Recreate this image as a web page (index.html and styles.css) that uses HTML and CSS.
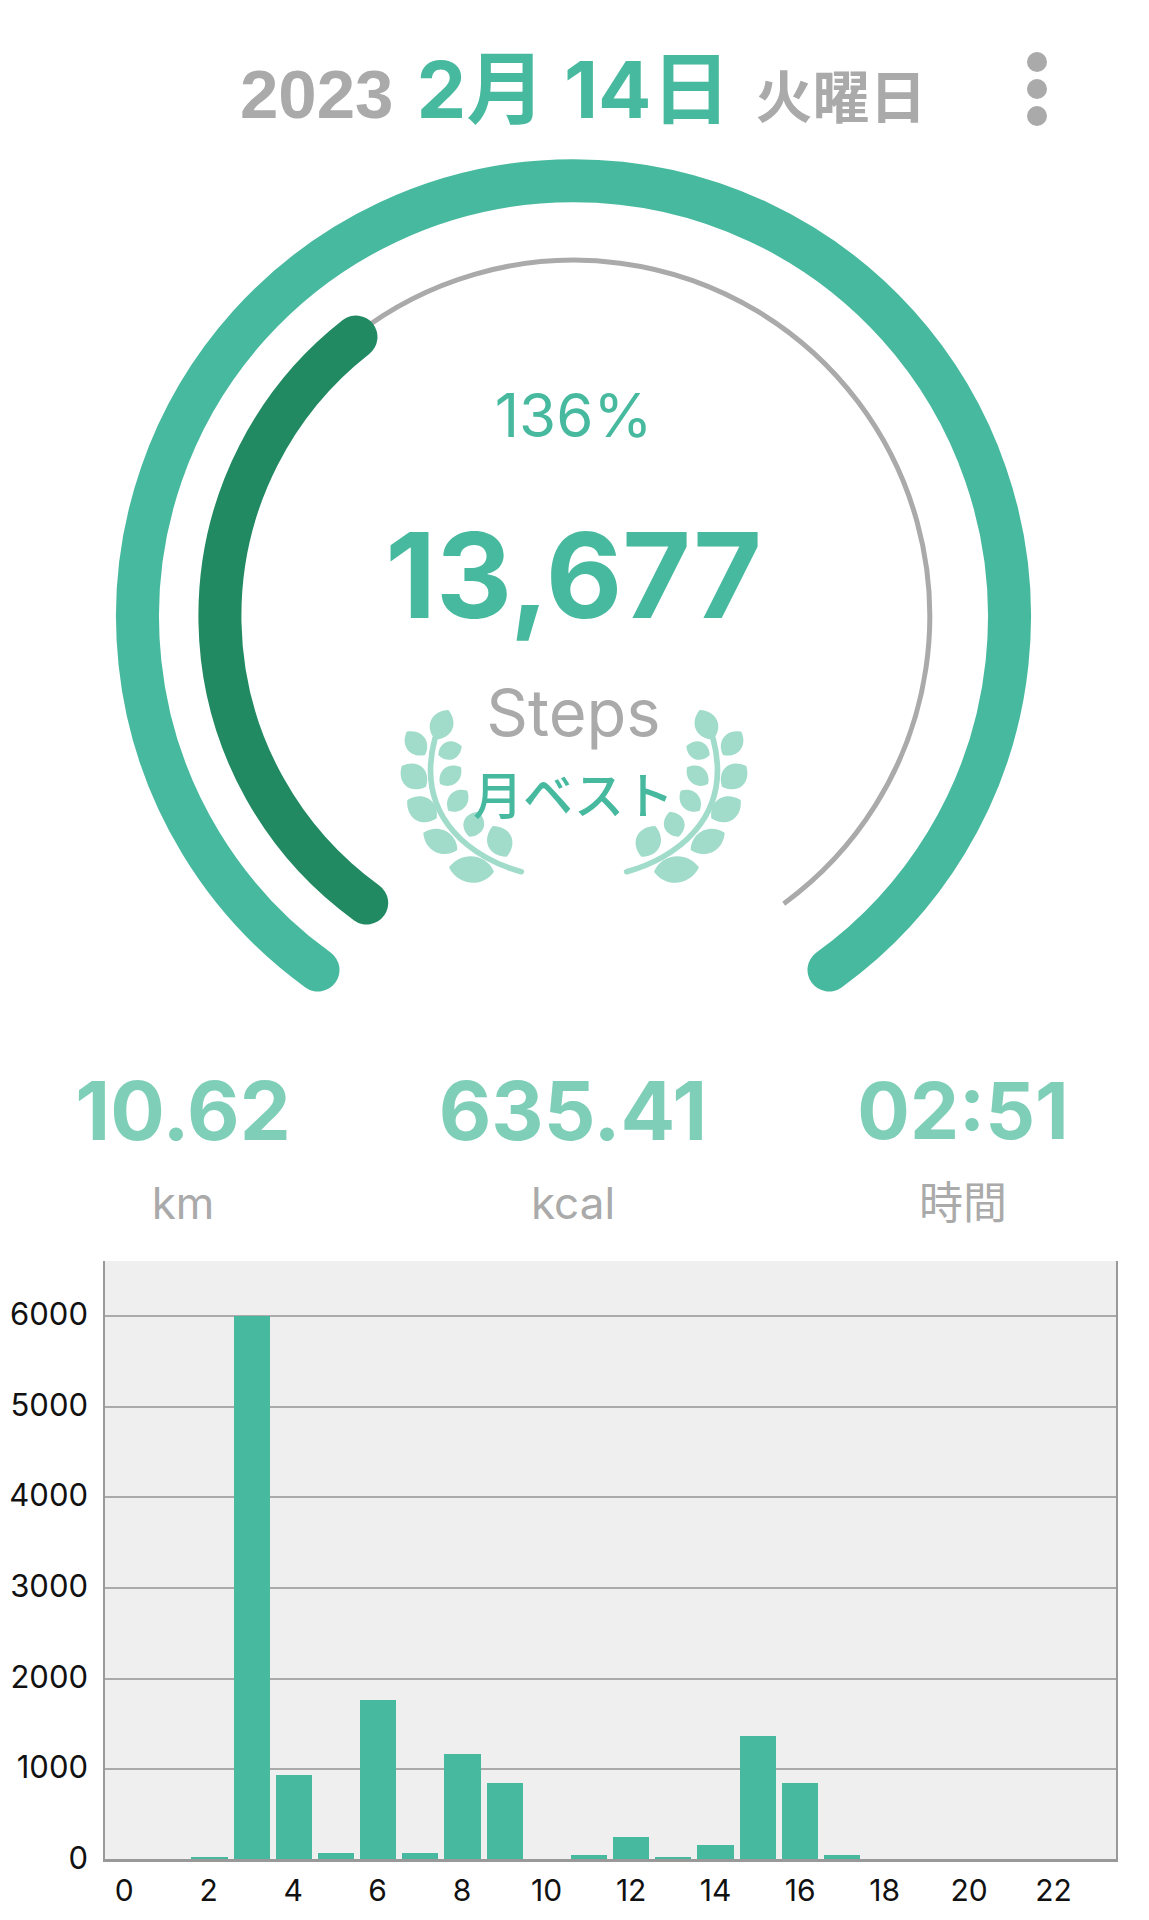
FILE: index.html
```html
<!DOCTYPE html>
<html>
	<head>
		<meta charset="utf-8">
		<title>歩数</title>
		<link rel="stylesheet" href="styles.css">
	</head>
	<body>
		<div class="header">
			<span class="year">2023</span>
			<span class="date">2月 14日</span>
			<span class="weekday">火曜日</span>
			<div class="menu"><i></i><i></i><i></i></div>
		</div>

		<div class="gauge">
			<svg class="gauge-svg" width="1149" height="880" viewBox="0 150 1149 880">
				<defs>
					<path id="leaf" d="M0 0C.2 -.5 .75 -.55 1 0C.75 .55 .2 .5 0 0Z"/>
					<g id="laurel" transform="translate(380 660) scale(.3333)">
						<path class="stem" d="M424 635C290 600 100 480 165 235"/>
						<use href="#leaf" transform="matrix(40 -88 80 36 165 238)"/>
						<use href="#leaf" transform="matrix(-55 -70 62 -49 135 285)"/>
						<use href="#leaf" transform="matrix(70 -27 26 65 175 285)"/>
						<use href="#leaf" transform="matrix(-73 -62 61 -72 138 380)"/>
						<use href="#leaf" transform="matrix(63 -50 44 55 180 372)"/>
						<use href="#leaf" transform="matrix(-88 -55 50 -80 170 475)"/>
						<use href="#leaf" transform="matrix(57 -60 52 50 205 452)"/>
						<use href="#leaf" transform="matrix(-102 -52 40 -79 232 570)"/>
						<use href="#leaf" transform="matrix(27 -75 74 26 268 530)"/>
						<use href="#leaf" transform="matrix(-42 -92 86 -40 380 590)"/>
						<use href="#leaf" transform="matrix(-135 -13 10 -100 342 635)"/>
					</g>
				</defs>
				<path class="arc-outer" d="M318 970A436 436 0 1 1 829 970"/>
				<path class="arc-thin" d="M354.67 335.58A356 356 0 1 1 783.75 903.65"/>
				<path class="arc-dark" d="M366.7 903A354 354 0 0 1 356 337"/>
				<g class="leaves">
					<use href="#laurel"/>
					<use href="#laurel" transform="translate(1148 0) scale(-1 1)"/>
				</g>
			</svg>
			<div class="gauge-text">
				<div class="percent">136%</div>
				<div class="steps">13,677</div>
				<div class="steps-unit">Steps</div>
				<div class="best">月ベスト</div>
			</div>
		</div>

		<div class="stats">
			<div class="stat"><div class="stat-value">10.62</div><div class="stat-unit">km</div></div>
			<div class="stat"><div class="stat-value">635.41</div><div class="stat-unit">kcal</div></div>
			<div class="stat"><div class="stat-value stat-time">02:51</div><div class="stat-unit">時間</div></div>
		</div>

		<div class="chart">
			<div class="y-axis">
				<div class="y-tick">6000</div>
				<div class="y-tick">5000</div>
				<div class="y-tick">4000</div>
				<div class="y-tick">3000</div>
				<div class="y-tick">2000</div>
				<div class="y-tick">1000</div>
				<div class="y-tick">0</div>
			</div>
			<div class="plot-wrap">
				<div class="plot">
					<div class="grid-row"></div>
					<div class="grid-row"></div>
					<div class="grid-row"></div>
					<div class="grid-row"></div>
					<div class="grid-row"></div>
					<div class="grid-row"></div>
					<div class="bars">
						<div class="bar"></div>
						<div class="bar"></div>
						<div class="bar" style="height: 2px"></div>
						<div class="bar" style="height: 543px"></div>
						<div class="bar" style="height: 84px"></div>
						<div class="bar" style="height: 6px"></div>
						<div class="bar" style="height: 159px"></div>
						<div class="bar" style="height: 6px"></div>
						<div class="bar" style="height: 105px"></div>
						<div class="bar" style="height: 76px"></div>
						<div class="bar"></div>
						<div class="bar" style="height: 4px"></div>
						<div class="bar" style="height: 22px"></div>
						<div class="bar" style="height: 2px"></div>
						<div class="bar" style="height: 14px"></div>
						<div class="bar" style="height: 123px"></div>
						<div class="bar" style="height: 76px"></div>
						<div class="bar" style="height: 4px"></div>
						<div class="bar"></div>
						<div class="bar"></div>
						<div class="bar"></div>
						<div class="bar"></div>
						<div class="bar"></div>
						<div class="bar"></div>
					</div>
				</div>
				<div class="x-axis">
					<span class="x-tick">0</span>
					<span class="x-tick">2</span>
					<span class="x-tick">4</span>
					<span class="x-tick">6</span>
					<span class="x-tick">8</span>
					<span class="x-tick">10</span>
					<span class="x-tick">12</span>
					<span class="x-tick">14</span>
					<span class="x-tick">16</span>
					<span class="x-tick">18</span>
					<span class="x-tick">20</span>
					<span class="x-tick">22</span>
				</div>
			</div>
		</div>
	</body>
</html>
```
FILE: styles.css
```css
html, body {
    margin: 0;
    padding: 0;
    background: #fff;
}
body {
    width: 1149px;
    height: 1920px;
    overflow: hidden;
    font-family: Inter, "Noto Sans CJK JP", sans-serif;
}

/* header */
.header {
    height: 150px;
    display: flex;
    align-items: baseline;
    padding-left: 240px;
    box-sizing: border-box;
    padding-top: 49px;
    color: #aaa;
    font-weight: 700;
}
.year {
    font-family: "Liberation Sans", sans-serif;
    font-size: 69px;
    line-height: 80px;
    margin-right: 23px;
}
.date {
    color: #47b99e;
    font-size: 79px;
    line-height: 80px;
    margin-right: 25px;
}
.weekday {
    font-size: 57px;
    line-height: 80px;
    font-weight: 700;
}
.menu {
    position: absolute;
    left: 1027px;
    top: 52px;
    display: flex;
    flex-direction: column;
    gap: 7px;
}
.menu i {
    display: block;
    width: 20px;
    height: 20px;
    border-radius: 50%;
    background: #aaa;
}

/* gauge */
.gauge {
    position: relative;
    height: 880px;
}
.gauge-svg {
    display: block;
}
.arc-outer, .arc-thin, .arc-dark {
    fill: none;
    stroke-linecap: round;
}
.arc-outer {
    stroke: #47b99e;
    stroke-width: 43;
}
.arc-thin {
    stroke: #aaa;
    stroke-width: 5;
    stroke-linecap: butt;
}
.arc-dark {
    stroke: #228a63;
    stroke-width: 43;
}
.leaves {
    fill: #a0dcc9;
}
.stem {
    fill: none;
    stroke: #a0dcc9;
    stroke-width: 17;
    stroke-linecap: round;
}
.gauge-text {
    position: absolute;
    left: 0;
    right: 2px;
    top: 225px;
    display: flex;
    flex-direction: column;
    align-items: center;
    color: #47b99e;
}
.percent {
    font-size: 60px;
    line-height: 80px;
    font-weight: 400;
}
.steps {
    font-size: 118px;
    line-height: 130px;
    font-weight: 700;
    margin-top: 55px;
}
.steps-unit {
    font-size: 65px;
    line-height: 80px;
    font-weight: 400;
    color: #aaa;
    margin-top: 33px;
}
.best {
    font-size: 50px;
    line-height: 60px;
    font-weight: 500;
    margin-top: 13px;
}

/* stats */
.stats {
    height: 231px;
    display: grid;
    grid-template-columns: repeat(3, 363px);
    justify-content: center;
    column-gap: 27px;
    text-align: center;
    box-sizing: border-box;
    padding-top: 31px;
    padding-right: 3px;
}
.stat-value {
    font-size: 81px;
    line-height: 100px;
    font-weight: 700;
    color: #7fcfb8;
}
.stat-time {
    font-size: 78px;
}
.stat-unit {
    font-size: 44px;
    line-height: 60px;
    color: #aaa;
    margin-top: 12px;
}

/* chart */
.chart {
    display: flex;
}
.y-axis {
    width: 103px;
    padding-top: 8px;
    box-sizing: border-box;
}
.y-tick {
    height: 90.67px;
    line-height: 90.67px;
    padding-right: 15px;
    text-align: right;
    font-size: 31px;
    color: #111;
}
.plot-wrap {
    width: 1015px;
}
.plot {
    position: relative;
    height: 601px;
    padding-top: 54px;
    box-sizing: border-box;
    background: #efefef;
    border-left: 2px solid #999;
    border-right: 2px solid #999;
    border-bottom: 3px solid #999;
}
.grid-row {
    height: 90.67px;
    box-sizing: border-box;
    border-top: 2px solid #aaa;
}
.bars {
    position: absolute;
    left: -1px;
    right: 0;
    bottom: 0;
    height: 545px;
    display: flex;
    align-items: flex-end;
}
.bar {
    flex: 1;
    margin: 0 3px;
    background: #47b99e;
}
.x-axis {
    display: flex;
    padding-top: 10px;
}
.x-tick {
    flex: 0 0 84.5px;
    box-sizing: border-box;
    padding-right: 42.25px;
    text-align: center;
    font-size: 30px;
    line-height: 36px;
    color: #111;
}
```
